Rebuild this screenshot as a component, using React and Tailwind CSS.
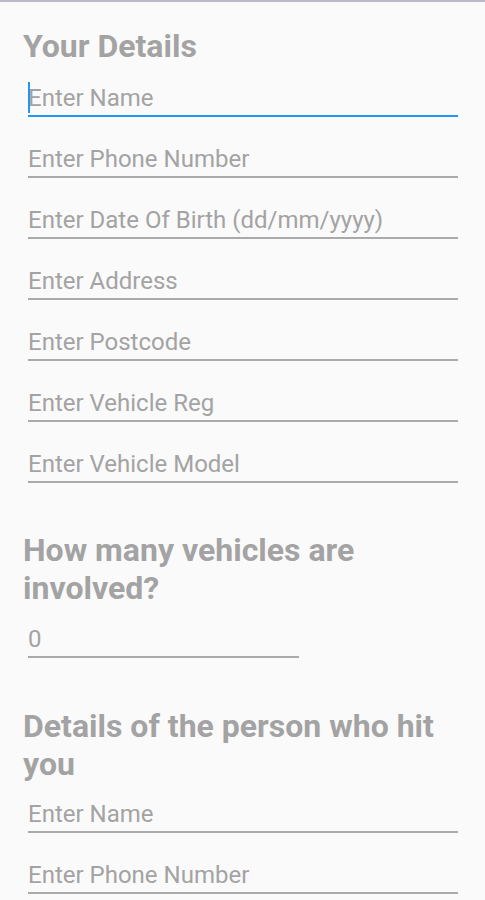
import React from "react";

const font = { fontFamily: "Roboto, 'Noto Sans', sans-serif" };

function Field({ text, focused, short }) {
  return (
    <div
      className={`ml-[5px] ${short ? "w-[271px]" : "w-[430px]"} text-[24px] leading-[28px] pb-[3px] border-b-2 ${
        focused ? "border-[#2196f3]" : "border-[#aaaaaa]"
      } text-[#a3a3a3] relative whitespace-nowrap`}
    >
      {focused && (
        <span className="absolute left-0 top-[-2px] w-[2px] h-[31px] bg-[#2196f3]" />
      )}
      {text}
    </div>
  );
}

function Heading({ children }) {
  return (
    <h2 className="text-[32px] leading-[38px] font-bold text-[#a3a3a3]">
      {children}
    </h2>
  );
}

export default function App() {
  return (
    <div className="min-h-[900px] bg-[#fafafa] border-t-2 border-[#b9b9c9] overflow-hidden" style={font}>
      <div className="px-[23px] pt-[25px] flex flex-col">
        <Heading>Your Details</Heading>
        <div className="mt-[19px] flex flex-col gap-[28px]">
          <Field text="Enter Name" focused />
          <Field text="Enter Phone Number" />
          <Field text="Enter Date Of Birth (dd/mm/yyyy)" />
          <Field text="Enter Address" />
          <Field text="Enter Postcode" />
          <Field text="Enter Vehicle Reg" />
          <Field text="Enter Vehicle Model" />
        </div>
        <div className="mt-[48px]">
          <Heading>
            How many vehicles are
            <br />
            involved?
          </Heading>
        </div>
        <div className="mt-[18px]">
          <Field text="0" short />
        </div>
        <div className="mt-[49px]">
          <Heading>
            Details of the person who hit
            <br />
            you
          </Heading>
        </div>
        <div className="mt-[17px] flex flex-col gap-[28px]">
          <Field text="Enter Name" />
          <Field text="Enter Phone Number" />
        </div>
      </div>
    </div>
  );
}
